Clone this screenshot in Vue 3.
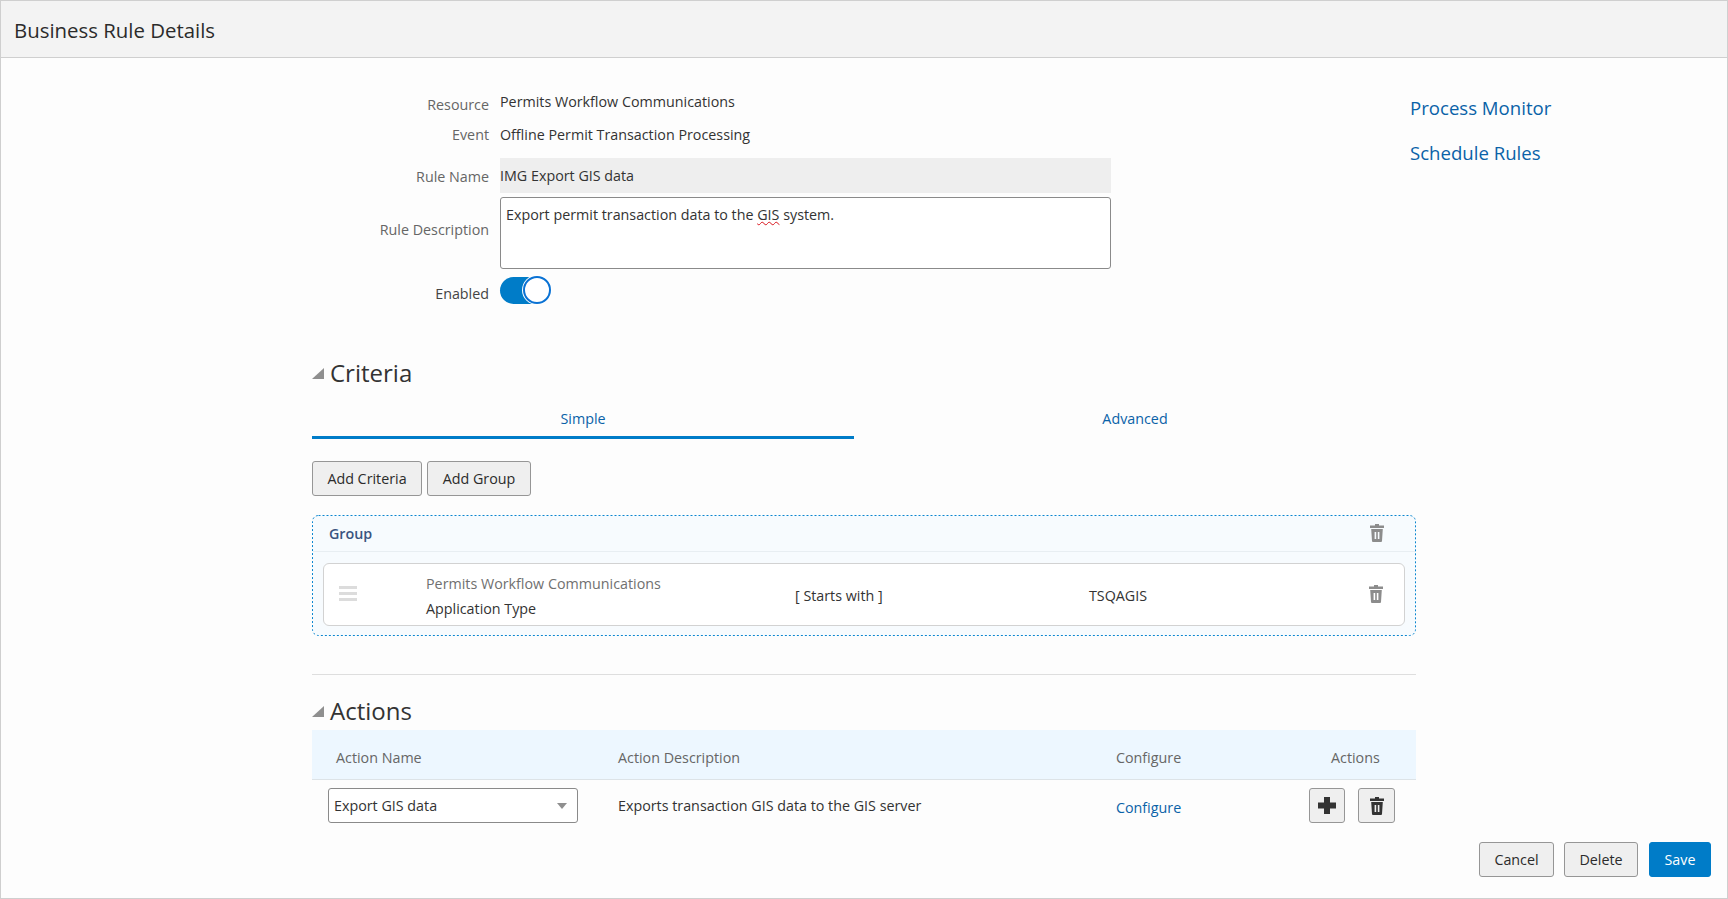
<script setup>
const trash = "M5 0h4v1.5h5V4H0V1.5h5zM1.2 5h11.6l-.8 12a1 1 0 0 1-1 1H3a1 1 0 0 1-1-1zM4.6 8v7h1.6V8zM7.8 8v7h1.6V8z";
</script>

<template>
  <div class="frame">
    <header class="top"><h1>Business Rule Details</h1></header>
    <main class="content">
      <div class="upper">
        <section class="form">
          <div class="row r-res"><label class="lab">Resource</label><span class="val">Permits Workflow Communications</span></div>
          <div class="row r-evt"><label class="lab">Event</label><span class="val">Offline Permit Transaction Processing</span></div>
          <div class="row r-name"><label class="lab">Rule Name</label><div class="val readonly">IMG Export GIS data</div></div>
          <div class="row r-desc"><label class="lab">Rule Description</label><div class="val area">Export permit transaction data to the <span class="spell">GIS</span> system.</div></div>
          <div class="row r-en"><label class="lab dark">Enabled</label><div class="toggle"><span class="knob"></span></div></div>
        </section>
        <nav class="side">
          <a>Process Monitor</a>
          <a>Schedule Rules</a>
        </nav>
      </div>

      <h2 class="sec crit"><span class="tri"></span>Criteria</h2>
      <div class="tabs">
        <div class="tab active">Simple</div>
        <div class="tab second">Advanced</div>
      </div>
      <div class="adders">
        <button class="btn add1">Add Criteria</button>
        <button class="btn add2">Add Group</button>
      </div>
      <div class="group">
        <svg class="dots" width="1104" height="121" viewBox="0 0 1104 121"><rect x="0.5" y="0.5" width="1103" height="120" rx="6" fill="none" stroke="#0a86d0" stroke-dasharray="2 2" /></svg>
        <div class="g-head">
          <span class="g-title">Group</span>
          <svg class="trash t1" viewBox="0 0 14 18"><path :d="trash" fill-rule="evenodd" /></svg>
        </div>
        <div class="g-row">
          <div class="drag"><i></i><i></i><i></i></div>
          <div class="g-field"><div class="f1">Permits Workflow Communications</div><div class="f2">Application Type</div></div>
          <div class="g-op">[ Starts with ]</div>
          <div class="g-value">TSQAGIS</div>
          <svg class="trash t2" viewBox="0 0 14 18"><path :d="trash" fill-rule="evenodd" /></svg>
        </div>
      </div>
      <hr class="rule" />
      <h2 class="sec act"><span class="tri"></span>Actions</h2>
      <div class="t-head">
        <span>Action Name</span><span>Action Description</span><span>Configure</span><span class="h-act">Actions</span>
      </div>
      <div class="t-row">
        <div class="select"><span>Export GIS data</span><i class="caret"></i></div>
        <span class="t-desc">Exports transaction GIS data to the GIS server</span>
        <a class="t-link">Configure</a>
        <div class="t-btns">
          <button class="btn icon plus"><svg width="18" height="17" viewBox="0 0 18 17"><path d="M6 0h6v5.500h6v6h-6V17H6v-5.500H0v-6h6z" fill="#333" /></svg></button>
          <button class="btn icon bin"><svg width="14" height="18" viewBox="0 0 14 18"><path :d="trash" fill-rule="evenodd" fill="#333" /></svg></button>
        </div>
      </div>
      <footer class="foot">
        <button class="btn f-c">Cancel</button>
        <button class="btn f-d">Delete</button>
        <button class="btn primary">Save</button>
      </footer>
    </main>
  </div>
</template>

<style>
html, body { margin: 0; }
</style>

<style scoped>
.frame {
  box-sizing: border-box;
  width: 1728px;
  height: 899px;
  border: 1px solid #cfcfcf;
  background: #fdfdfd;
  font-family: "Open Sans", "Noto Sans", sans-serif;
  font-size: 14.3px;
  color: #333;
  overflow: hidden;
}
.top {
  box-sizing: border-box;
  height: 57px;
  background: #f3f3f3;
  border-bottom: 1px solid #cfcfcf;
  display: flex;
  align-items: center;
  padding: 2px 0 0 13px;
}
h1 {
  margin: 0;
  font-size: 20.4px;
  font-weight: 400;
  color: #2b2b2b;
}
.content { padding-left: 311px; position: relative; }
.upper { display: flex; }
.form { width: 800px; padding-top: 31px; }
.row { display: flex; }
.lab {
  width: 177px;
  margin-right: 11px;
  text-align: right;
  color: #666;
  flex: none;
}
.lab.dark { color: #444; }
.val { color: #333; }
.r-res { height: 33px; align-items: flex-start; line-height: 26px; }
.r-res .lab { padding-top: 3px; }
.r-evt { height: 36px; line-height: 26px; }
.r-name { height: 39px; }
.r-name .lab { line-height: 36px; padding-top: 1px; }
.readonly {
  width: 611px;
  height: 35px;
  line-height: 35px;
  background: #eeeeee;
}
.r-desc { height: 79px; }
.r-desc .lab { line-height: 66px; }
.area {
  box-sizing: border-box;
  width: 611px;
  height: 72px;
  border: 1px solid #8a8a8a;
  border-radius: 3px;
  padding: 7px 5px;
  line-height: 20px;
  background: #fff;
}
.spell { text-decoration: underline wavy #d8141c; text-decoration-thickness: 1px; }
.r-en { height: 28px; align-items: center; }
.r-en .lab { padding-top: 7px; }
.toggle {
  position: relative;
  width: 51px;
  height: 28px;
}
.toggle::before {
  content: "";
  position: absolute;
  left: 0;
  top: 1px;
  width: 40px;
  height: 27px;
  border-radius: 14px 0 0 14px;
  background: #007cc8;
}
.knob {
  position: absolute;
  right: 0;
  top: 0;
  box-sizing: border-box;
  width: 28px;
  height: 28px;
  border-radius: 50%;
  background: #fff;
  border: 2px solid #0a72d4;
  box-shadow: 0 0 0 1px #fff;
}
.side {
  margin-left: 298px;
  padding-top: 36px;
  display: flex;
  flex-direction: column;
  gap: 18px;
}
.side a { font-size: 18.6px; line-height: 27px; color: #0a62a8; white-space: nowrap; }
.sec {
  margin: 0;
  font-weight: 400;
  font-size: 24px;
  line-height: 34px;
  color: #333;
  display: flex;
  align-items: center;
}
.crit { margin-top: 52px; }
.tri {
  width: 0;
  height: 0;
  border-style: solid;
  border-width: 0 0 11px 12px;
  border-color: transparent transparent #8f8f8f transparent;
  margin-right: 6px;
  margin-top: 1px;
}
.tabs { display: flex; width: 1104px; margin-top: 4px; }
.tab {
  box-sizing: border-box;
  width: 542px;
  height: 45px;
  line-height: 50px;
  text-align: center;
  color: #0a62a8;
}
.tab.second { width: 562px; }
.tab.active { border-bottom: 3px solid #007cc8; }
.adders { display: flex; gap: 5px; margin-top: 22px; }
.btn {
  box-sizing: border-box;
  height: 35px;
  background: #efefef;
  border: 1px solid #969696;
  border-radius: 3px;
  font: inherit;
  color: #2b2b2b;
  padding: 0;
  display: flex;
  align-items: center;
  justify-content: center;
}
.add1 { width: 110px; }
.add2 { width: 104px; }
.group {
  position: relative;
  box-sizing: border-box;
  width: 1104px;
  height: 121px;
  margin-top: 19px;
  border: 1px solid transparent;
  border-radius: 6px;
  background: #f7fbfe;
  background-clip: padding-box;
}
.dots { position: absolute; left: -1px; top: -1px; }
.g-head {
  box-sizing: border-box;
  height: 36px;
  border-bottom: 1px solid #e8eef2;
  display: flex;
  align-items: center;
  justify-content: space-between;
  padding: 0 31px 0 16px;
}
.g-title { font-weight: 600; color: #3a5480; }
.trash { width: 14px; height: 18px; fill: #8c8c8c; display: block; }
.t1 { margin-top: -2px; }
.g-row {
  box-sizing: border-box;
  height: 63px;
  margin: 11px 10px 0;
  background: #fff;
  border: 1px solid #d2d2d2;
  border-radius: 6px;
  display: flex;
  align-items: center;
}
.drag {
  width: 18px;
  margin-left: 15px;
  margin-top: -3px;
  display: flex;
  flex-direction: column;
  gap: 3px;
}
.drag i { display: block; height: 3px; background: #dcdcdc; }
.g-field { width: 369px; margin-left: 69px; line-height: 25px; padding-top: 2px; }
.f1 { color: #707070; }
.f2 { color: #333; }
.g-op { width: 294px; padding-top: 2px; }
.g-value { width: 280px; padding-top: 2px; }
.t2 { margin-top: -2px; }
.rule {
  width: 1104px;
  margin: 38px 0 0;
  border: 0;
  border-top: 1px solid #dedede;
}
.act { margin-top: 19px; }
.t-head {
  box-sizing: border-box;
  width: 1104px;
  height: 50px;
  margin-top: 2px;
  background: #edf7ff;
  border-bottom: 1px solid #dde3e7;
  display: grid;
  grid-template-columns: 282px 498px 215px 1fr;
  align-items: center;
  padding: 5px 0 0 24px;
  color: #666;
}
.t-row {
  width: 1104px;
  display: grid;
  grid-template-columns: 290px 498px 193px 1fr;
  padding-left: 16px;
  box-sizing: border-box;
  margin-top: 8px;
  align-items: center;
  height: 35px;
}
.select {
  box-sizing: border-box;
  width: 250px;
  height: 35px;
  border: 1px solid #8a8a8a;
  border-radius: 3px;
  background: #fff;
  display: flex;
  align-items: center;
  justify-content: space-between;
  padding: 0 10px 0 5px;
  color: #333;
}
.caret {
  width: 0;
  height: 0;
  border-style: solid;
  border-width: 6px 5.5px 0;
  border-color: #8f8f8f transparent transparent;
}
.t-link { color: #0a62a8; padding-top: 3px; }
.t-btns { display: flex; gap: 13px; }
.icon { width: 36px; }
.bin { width: 37px; }
.foot {
  display: flex;
  justify-content: flex-end;
  gap: 10px;
  margin-top: 19px;
  padding-right: 16px;
}
.f-c { width: 75px; }
.f-d { width: 74px; }
.primary { width: 62px; margin-left: 1px; background: #007cc8; border-color: #007cc8; color: #fff; }
</style>
